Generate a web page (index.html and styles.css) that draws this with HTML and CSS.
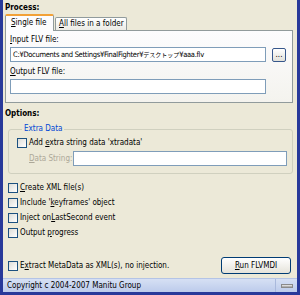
FILE: index.html
```html
<!DOCTYPE html>
<html lang="en">

<head>
    <meta charset="utf-8">
    <title>FLVMDI</title>
    <link rel="stylesheet" href="styles.css">
</head>

<body>
    <div class="window">
        <main class="main">
            <h2 class="titel">Process:</h2>

            <div class="tabs">
                <span class="tab valgt"><u>S</u>ingle file</span>
                <span class="tab"><u>A</u>ll files in a folder</span>
            </div>

            <section class="panel">
                <p class="label"><u>I</u>nput FLV file:</p>
                <div class="fil-raekke">
                    <div class="felt sti">C:¥Documents and Settings¥FinalFighter¥<span class="kana">デスクトップ</span>¥aaa.flv</div>
                    <button class="browse">...</button>
                </div>
                <p class="label label-2"><u>O</u>utput FLV file:</p>
                <div class="fil-raekke">
                    <div class="felt"></div>
                </div>
            </section>

            <h2 class="titel options">Options:</h2>

            <fieldset class="gruppe">
                <legend>Extra Data</legend>
                <label class="check"><span class="boks"></span><span>Add <u>e</u>xtra string data 'xtradata'</span></label>
                <div class="data-raekke">
                    <span class="graa"><u>D</u>ata String:</span>
                    <div class="felt"></div>
                </div>
            </fieldset>

            <div class="liste">
                <label class="check"><span class="boks"></span><span><u>C</u>reate XML file(s)</span></label>
                <label class="check"><span class="boks"></span><span>Include '<u>k</u>eyframes' object</span></label>
                <label class="check"><span class="boks"></span><span>Inject on<u>L</u>astSecond event</span></label>
                <label class="check"><span class="boks"></span><span>Output <u>p</u>rogress</span></label>
            </div>

            <div class="bund">
                <label class="check"><span class="boks"></span><span>E<u>x</u>tract MetaData as XML(s), no injection.</span></label>
                <button class="knap"><u>R</u>un FLVMDI</button>
            </div>
        </main>

        <footer class="status">
            <span class="status-tekst">Copyright c 2004-2007 Manitu Group</span>
            <span class="status-hjoerne"><span class="grip"></span></span>
        </footer>
    </div>
</body>

</html>
```

FILE: styles.css
```css
* {
    box-sizing: border-box;
}

body {
    margin: 0;
    width: 300px;
    height: 295px;
    background-color: #28399a;
    font-family: "DejaVu Sans Condensed", "Liberation Sans", "Noto Sans CJK JP", sans-serif;
    font-size: 8px;
    color: #000;
    overflow: hidden;
}

.window {
    margin: 0 3px;
    height: 292px;
    background-color: #ece9d8;
    display: flex;
    flex-direction: column;
}

.main {
    flex: 1;
    display: flex;
    flex-direction: column;
    padding: 2px 4px 0 2px;
}

.titel {
    margin: 0;
    font-size: 8px;
    font-weight: bold;
    line-height: 12px;
}

/* faner */

.tabs {
    display: flex;
    align-items: flex-end;
    height: 16px;
}

.tab {
    height: 13px;
    width: 72px;
    margin-left: 1px;
    padding-left: 3px;
    line-height: 12px;
    border: 1px solid #919b9c;
    border-bottom: none;
    border-radius: 2px 2px 0 0;
    background: linear-gradient(#ffffff, #ecebe5);
}

.tab.valgt {
    position: relative;
    z-index: 1;
    height: 17px;
    width: 49px;
    margin: 0 0 -1px 0;
    padding-left: 5px;
    line-height: 14px;
    border-top: 2px solid #f2a136;
    background: #fcfcfe;
}

.panel {
    height: 73px;
    border: 1px solid #919b9c;
    background: linear-gradient(#fcfcfe, #f4f3ee);
    padding: 3px 0 0 4px;
}

.label {
    margin: 0;
    line-height: 12px;
}

.label-2 {
    margin-top: 4px;
}

.fil-raekke {
    display: flex;
    align-items: center;
    margin-top: 1px;
}

.felt {
    width: 256px;
    height: 15px;
    border: 1px solid #7f9db9;
    background-color: #fff;
    padding-left: 2px;
    line-height: 13px;
    white-space: nowrap;
    overflow: hidden;
}

.sti {
    font-size: 7.5px;
    letter-spacing: -0.3px;
}

.kana {
    font-size: 6px;
    letter-spacing: 0;
}

.browse {
    width: 14px;
    height: 14px;
    margin-left: 6px;
    padding: 0;
    border: 1px solid #36578c;
    border-radius: 2px;
    background: linear-gradient(#ffffff, #e2e1da);
    font-family: inherit;
    font-size: 8px;
    line-height: 8px;
}

/* options */

.options {
    margin-top: 5px;
}

.gruppe {
    margin: 3px 0 0 3px;
    padding: 0 5px 7px 8px;
    border: 1px solid #d0d0bf;
    border-radius: 3px;
    min-width: 0;
}

.gruppe legend {
    margin-left: 5px;
    padding: 0 2px;
    color: #0046d5;
    line-height: 12px;
}

.gruppe .check {
    margin-top: 1px;
    height: 13px;
}

.data-raekke {
    display: flex;
    align-items: center;
    margin: 2px 0 0 12px;
    height: 15px;
}

.graa {
    color: #aca899;
    width: 44px;
}

.data-raekke .felt {
    flex: 1;
}

.check {
    display: flex;
    align-items: center;
    height: 15px;
    line-height: 12px;
    white-space: nowrap;
}

.boks {
    width: 10px;
    height: 10px;
    margin-right: 2px;
    border: 1px solid #1c5180;
    background: linear-gradient(135deg, #dcdcd7, #ffffff);
    flex-shrink: 0;
}

.liste {
    margin-top: 6px;
    padding-left: 3px;
}

.bund {
    margin-top: auto;
    margin-bottom: 4px;
    display: flex;
    align-items: center;
    justify-content: space-between;
    padding-left: 3px;
}

.knap {
    width: 70px;
    height: 17px;
    margin-right: 2px;
    padding: 0;
    border: 1px solid #003c74;
    border-radius: 3px;
    background: linear-gradient(#ffffff, #e5e3da);
    font-family: inherit;
    font-size: 8px;
    color: #000;
}

/* statuslinje */

.status {
    height: 14px;
    display: flex;
    background: linear-gradient(#d6e0f4, #bccbeb);
    border-top: 1px solid #b4c4e6;
}

.status-tekst {
    flex: 1;
    padding-left: 4px;
    line-height: 13px;
    border-right: 1px solid #a9b9dc;
}

.status-hjoerne {
    width: 21px;
    display: flex;
    align-items: center;
    justify-content: center;
}

.grip {
    width: 12px;
    height: 4px;
    background: linear-gradient(#f2f2f2, #9a9a9a);
    border: 1px solid #8a8a8a;
}
```
